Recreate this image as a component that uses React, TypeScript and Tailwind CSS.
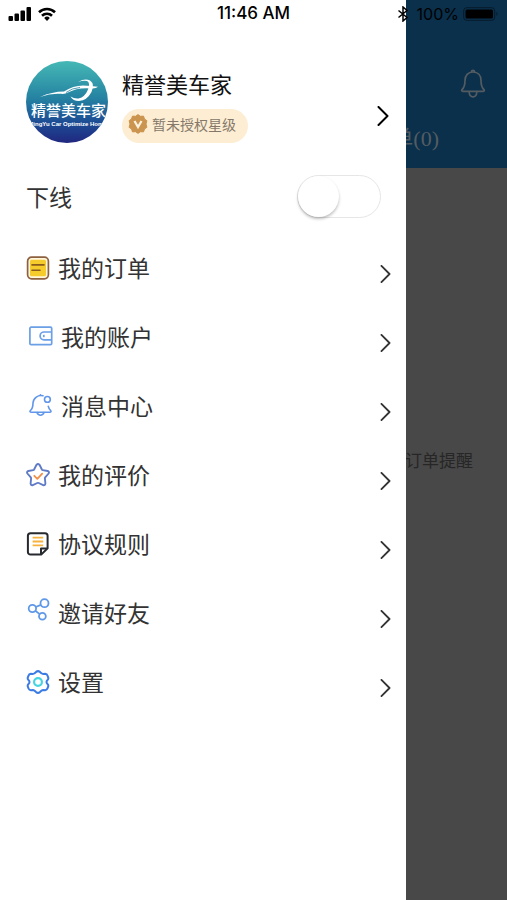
import { useState } from 'react';
import type { ReactNode } from 'react';

type MenuItem = {
  label: string;
  icon: ReactNode;
  inset?: boolean;
};

function OrderIcon() {
  return (
    <svg viewBox="0 0 24 24" className="h-6 w-6" fill="none">
      <rect x="1.6" y="1.2" width="20.8" height="21.6" rx="4" fill="#fff6dc" stroke="#8d6040" strokeWidth="1.7" />
      <rect x="4" y="3.8" width="16" height="16.4" rx="1.5" fill="#f6cb2c" />
      <path d="M6 8.9h12M6 14.2h8" stroke="#8a5c1e" strokeWidth="1.6" strokeLinecap="round" />
    </svg>
  );
}

function WalletIcon() {
  return (
    <svg viewBox="0 0 24 24" className="h-6 w-6" fill="none" stroke="#6b9fe6" strokeWidth="1.7">
      <rect x="0.9" y="2.2" width="21.8" height="17.4" rx="1.2" />
      <path d="M22.6 7H15a3.8 3.8 0 0 0 0 7.8h7.6" />
      <path d="M14.8 9.8v2.4" />
    </svg>
  );
}

function MessageIcon() {
  return (
    <svg viewBox="0 0 24 24" className="h-6 w-6" fill="none" stroke="#6196ea" strokeWidth="1.6" strokeLinecap="round" strokeLinejoin="round">
      <path d="M14 1.800A8 8 0 0 0 4 9c0 4-.8 6-2.600 7.500-.7.900-.4 1.800.8 1.800h18.600c1.200 0 1.500-.9.800-1.800-1.300-1.300-2-2.700-2.300-4.100" />
      <path d="M11.400 1.300V.8" />
      <circle cx="18.400" cy="5.400" r="2.900" />
      <path d="M8 18.600c.6 1.800 1.800 2.600 3.500 2.600s2.900-.8 3.500-2.600" />
    </svg>
  );
}

function ReviewIcon() {
  return (
    <svg viewBox="0 0 24 24" className="h-6 w-6" fill="none" strokeLinecap="round" strokeLinejoin="round">
      <path
        d="M10.500 1.800q1.500-1.600 3 0l2.400 4.700q.3.500.9.600l4.900.9q2 .7.900 2.500l-3.400 3.900q-.4.500-.3 1.100l.5 5q-.2 2.200-2.200 1.600l-4.500-2.100q-.7-.3-1.400 0l-4.500 2.100q-2 .6-2.200-1.600l.5-5q.1-.6-.3-1.100L1.400 10.500Q.3 8.700 2.300 8l4.900-.9q.6-.1.900-.6z"
        stroke="#5f7ac6"
        strokeWidth="1.9"
      />
      <path d="M8.300 12.800l3 3 4.900-5.200" stroke="#f0904a" strokeWidth="1.8" />
    </svg>
  );
}

function RulesIcon() {
  return (
    <svg viewBox="0 0 24 24" className="h-6 w-6" fill="none" strokeLinejoin="round">
      <path d="M4.500 1.200h14.500a2.600 2.600 0 0 1 2.600 2.600v12.400l-6.400 6.400H4.500a2.600 2.600 0 0 1-2.600-2.600V3.800a2.600 2.600 0 0 1 2.600-2.600z" stroke="#26292e" strokeWidth="2" />
      <path d="M15 22v-5.600h6.200" stroke="#26292e" strokeWidth="2" />
      <path d="M6.600 5.600h10.600M6.600 9.500h10.600M6.600 13.400h10.600" stroke="#f6b23e" strokeWidth="1.9" />
    </svg>
  );
}

function InviteIcon() {
  return (
    <svg viewBox="0 0 24 24" className="mb-1.5 h-6 w-6" fill="none" stroke="#5f98e8" strokeWidth="1.8">
      <circle cx="18.500" cy="5.200" r="4" />
      <circle cx="6.400" cy="10.500" r="3.700" />
      <circle cx="16.400" cy="18.200" r="3.400" />
      <path d="M9.700 9l5.200-2.200M9.300 12.800l4.400 3.300" />
    </svg>
  );
}

function SettingsIcon() {
  return (
    <svg viewBox="0 0 24 24" className="h-6 w-6" fill="none" strokeLinejoin="round">
      <path
        d="M10.100 1.900q1.900-1.500 3.800 0l1.500 1.400q.8.600 1.800.6l2-.1q1.800.2 2.400 2l.7 2q.2 1.100-.6 1.900-1.200 1.100-1.200 2.300t1.200 2.300q.8.800.6 1.900l-.7 2q-.6 1.800-2.400 2l-2-.1q-1 0-1.800.6l-1.500 1.400q-1.900 1.500-3.800 0l-1.500-1.400q-.8-.6-1.800-.6l-2 .1q-1.800-.2-2.400-2l-.7-2q-.2-1.100.6-1.900 1.200-1.100 1.200-2.300T2.300 9.700q-.8-.8-.6-1.900l.7-2q.6-1.800 2.400-2l2 .1q1 0 1.800-.6z"
        stroke="#3b7be6"
        strokeWidth="2"
      />
      <circle cx="12" cy="12" r="3.900" stroke="#45d5e2" strokeWidth="2.200" />
    </svg>
  );
}

const MENU: MenuItem[] = [
  { label: '我的订单', icon: <OrderIcon /> },
  { label: '我的账户', icon: <WalletIcon />, inset: true },
  { label: '消息中心', icon: <MessageIcon />, inset: true },
  { label: '我的评价', icon: <ReviewIcon /> },
  { label: '协议规则', icon: <RulesIcon /> },
  { label: '邀请好友', icon: <InviteIcon /> },
  { label: '设置', icon: <SettingsIcon /> },
];

function StatusBar() {
  return (
    <div className="pointer-events-none absolute inset-x-0 top-0 z-20 flex h-7 items-center justify-between px-2 font-['Inter','Liberation_Sans',sans-serif] font-medium text-black">
      <div className="flex flex-1 items-center gap-1.5">
        <svg viewBox="0 0 24 14" className="h-3.5 w-6">
          <rect x="0.500" y="9" width="4.500" height="5" rx="1" />
          <rect x="6.500" y="6.500" width="4.500" height="7.500" rx="1" />
          <rect x="12.500" y="3.500" width="4.500" height="10.500" rx="1" />
          <rect x="18.500" y="0" width="4.500" height="14" rx="1" />
        </svg>
        <svg viewBox="0 0 18 14" className="h-3.5 w-[18px]" fill="none" stroke="#000" strokeWidth="2.600">
          <path d="M1 5.200a11.500 11.500 0 0 1 16 0" />
          <path d="M4 8.700a7.200 7.200 0 0 1 10 0" />
          <path d="M9 14L6.200 10.900a4 4 0 0 1 5.600 0z" fill="#000" stroke="none" />
        </svg>
      </div>
      <span className="text-[17px]">11:46 AM</span>
      <div className="flex flex-1 items-center justify-end gap-1">
        <svg viewBox="0 0 12 16" className="mr-1 h-4 w-3" fill="none" stroke="#000" strokeWidth="1.500">
          <path d="M1.500 4.500l8.500 7L6 15V1l4 3.500-8.500 7" />
        </svg>
        <span className="text-base font-normal">100%</span>
        <svg viewBox="0 0 36 14" className="h-3.5 w-9">
          <rect x="0.700" y="0.700" width="31" height="12.600" rx="3" fill="none" stroke="#000" strokeOpacity="0.450" />
          <rect x="2.500" y="2.500" width="27.500" height="9" rx="1.500" />
          <path d="M33.500 4.800q2 2.200 0 4.400z" fillOpacity="0.500" />
        </svg>
      </div>
    </div>
  );
}

function Avatar() {
  return (
    <svg viewBox="0 0 82 82" className="h-[82px] w-[82px] shrink-0 rounded-full">
      <defs>
        <linearGradient id="sky" x1="0" y1="0" x2="0" y2="1">
          <stop offset="0" stopColor="#45b8b5" />
          <stop offset="0.450" stopColor="#2583a2" />
          <stop offset="0.750" stopColor="#1d4c94" />
          <stop offset="1" stopColor="#20277f" />
        </linearGradient>
      </defs>
      <rect width="82" height="82" fill="url(#sky)" />
      {/* car outline with a ring at its front */}
      <path d="M14 36q12-5.500 24-5.500 9-6 19-6 8 .2 15 1.200-2 2-6 1.800-14-1.500-24 4-3 1.800-7 1.300-10-.8-21 3.200z" fill="#fff" />
      <path d="M40 31.500q6-4.500 14-5" fill="none" stroke="#2583a2" strokeWidth="0.800" />
      <path d="M52 21q7-4 12-1.500 5 3.500 1.500 11.500-4.500 8.500-12.500 9-6 0-8.500-4.500 4 2.500 8 2 6.500-1.500 9.500-9 2.500-7-1-8.500-3.500-1-9 1z" fill="#fff" />
      <text x="5" y="55" fill="#fff" fontSize="15" fontWeight="500" fontFamily="Noto Sans CJK SC, sans-serif">
        精誉美车家
      </text>
      <text x="4" y="65" fill="#fff" fontSize="6" fontWeight="700" fontFamily="Liberation Sans, sans-serif">
        JingYu Car Optimize Home
      </text>
    </svg>
  );
}

function VerifiedIcon() {
  return (
    <svg viewBox="0 0 20 20" className="h-5 w-5">
      <path
        d="M10 .6l2.500 1.700 3-.2 1 2.900 2.400 1.700L18 10l.9 3.300-2.400 1.700-1 2.900-3-.2L10 19.400l-2.500-1.700-3 .2-1-2.900-2.400-1.700L2 10l-.9-3.300L3.500 5l1-2.900 3 .2z"
        fill="#cc954f"
        stroke="#cc954f"
        strokeLinejoin="round"
      />
      <path d="M6.500 7l3.500 6 3.500-6" fill="none" stroke="#fff3e0" strokeWidth="2.200" />
    </svg>
  );
}

function Chevron({ className }: { className: string }) {
  return (
    <svg viewBox="0 0 12 20" className={className} fill="none" stroke="currentColor" strokeWidth="2" strokeLinecap="round" strokeLinejoin="round">
      <path d="M1.500 1l9 9-9 9" />
    </svg>
  );
}

function HomePage() {
  return (
    <div className="min-h-screen bg-[#484848]">
      <header className="flex h-42 flex-col items-end bg-[#0a304c] pt-[69px] text-[#555c61]">
        <button type="button" aria-label="通知" className="mr-5">
          <svg viewBox="0 0 28 30" className="h-[30px] w-7" fill="none" stroke="currentColor" strokeWidth="1.700" strokeLinecap="round" strokeLinejoin="round">
            <path d="M14 3c-5 0-8 3.500-8 8.400 0 4.700-.9 7.200-3 9.200-.7.800-.3 1.700.7 1.700h20.600c1 0 1.400-.9.700-1.700-2.100-2-3-4.500-3-9.200C22 6.500 19 3 14 3z" />
            <path d="M12.500 2.800q0-1.500 1.500-1.500t1.500 1.500" />
            <path d="M10.200 23.300c.2 2.800 1.700 4.600 3.800 4.600s3.600-1.800 3.800-4.600" />
          </svg>
        </button>
        <p className="mt-6 mr-17 font-['Liberation_Serif','Noto_Sans_CJK_SC',serif] text-[22px] leading-8">订单(0)</p>
      </header>
      <p className="mt-70 mr-[34px] text-right text-[17px] leading-6 text-[#262626]">订单提醒</p>
    </div>
  );
}

export default function App() {
  const [online, setOnline] = useState(false);

  return (
    <div className="relative min-h-screen overflow-hidden font-['Noto_Sans_CJK_SC',sans-serif]">
      <HomePage />
      <StatusBar />

      {/* Drawer */}
      <aside className="absolute inset-y-0 left-0 z-10 w-4/5 bg-white pt-[61px] text-[#333]">
        <button type="button" className="flex w-full items-center pr-[17px] pl-[26px] text-left">
          <Avatar />
          <span className="ml-3.5 flex flex-1 flex-col items-start">
            <span className="text-[22px] leading-7 text-[#111]">精誉美车家</span>
            <span className="mt-3 mb-[-8px] flex h-[34px] items-center gap-1 rounded-full bg-[#fdedd3] pr-3 pb-1 pl-1.5 text-sm text-[#85786a]">
              <VerifiedIcon />
              暂未授权星级
            </span>
          </span>
          <Chevron className="mt-7 h-5 w-3 text-black" />
        </button>

        <label className="mt-8 flex items-center justify-between pr-[25px] pl-[26px] text-[23px]">
          下线
          <input type="checkbox" role="switch" className="peer sr-only" checked={online} onChange={(e) => setOnline(e.target.checked)} />
          <span className="flex h-[43px] w-[84px] rounded-full border border-[#e6e6e6] bg-white peer-checked:justify-end peer-checked:bg-[#2b8fd6]">
            <span className="h-[41px] w-[41px] rounded-full bg-white shadow-[0_2px_3px_rgba(0,0,0,0.25)]" />
          </span>
        </label>

        <nav className="mt-[15px]">
          {MENU.map((item) => (
            <button
              key={item.label}
              type="button"
              className={`flex h-[69px] w-full items-center gap-2 pr-[15px] text-left text-[23px] ${item.inset ? 'pl-[29px]' : 'pl-[26px]'}`}
            >
              {item.icon}
              <span className="flex-1">{item.label}</span>
              <Chevron className="mt-3 h-[18px] w-[11px]" />
            </button>
          ))}
        </nav>
      </aside>
    </div>
  );
}
